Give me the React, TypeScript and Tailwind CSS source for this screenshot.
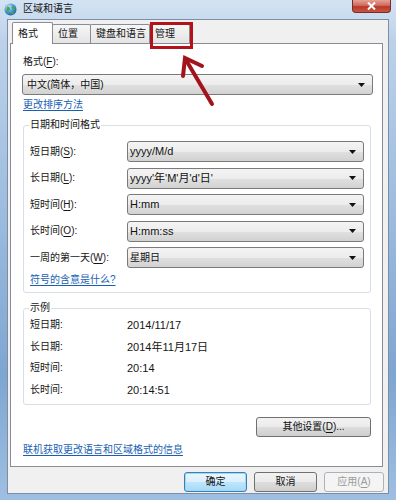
import React from "react";

const FONT = "font-['Liberation_Sans','Noto_Sans_CJK_SC',sans-serif]";
const T = "text-[10px] leading-[16px] text-[#151515]";

function Arrow() {
  return (
    <svg width="7" height="4" viewBox="0 0 7 4" className="shrink-0">
      <path d="M0 0h7L3.5 4z" fill="#111" />
    </svg>
  );
}

function Combo({
  text,
  className = "",
  latin = false,
  tight = false,
}: {
  text: string;
  className?: string;
  latin?: boolean;
  tight?: boolean;
}) {
  return (
    <div
      className={`flex items-center h-[21px] rounded-[3px] border border-[#7a7a7a] bg-[linear-gradient(to_bottom,#f4f4f4_0%,#ececec_50%,#e0e0e0_51%,#d2d2d2_100%)] ${tight ? "pl-[2px]" : "pl-[4px]"} pr-[7px] ${className}`}
    >
      <span className={`flex-1 ${latin ? "text-[11px]" : "text-[10px]"} leading-none text-[#111] whitespace-nowrap`}>{text}</span>
      <Arrow />
    </div>
  );
}

function U({ c }: { c: string }) {
  return <span className="underline underline-offset-2">{c}</span>;
}

function Tab({ label, selected, w }: { label: string; selected?: boolean; w: string }) {
  if (selected) {
    return (
      <div
        className={`relative z-10 ${w} h-[22px] mb-[-1px] ml-[2px] border border-b-0 border-[#898c95] rounded-t-[2px] bg-white flex items-start pt-[3px] pl-[5px] ${T}`}
      >
        {label}
      </div>
    );
  }
  return (
    <div
      className={`${w} h-[19px] -ml-px border border-b-0 border-[#898c95] rounded-t-[2px] bg-[linear-gradient(to_bottom,#f6f6f6,#e4e4e4)] flex items-start pt-[1px] pl-[5px] ${T}`}
    >
      {label}
    </div>
  );
}

function Btn({
  children,
  className = "",
  variant = "normal",
}: {
  children: React.ReactNode;
  className?: string;
  variant?: "normal" | "default" | "disabled";
}) {
  const v =
    variant === "default"
      ? "border-[#3c7fb1] shadow-[inset_0_0_0_1px_#9ed6f5] bg-[linear-gradient(to_bottom,#eaf6fd_0%,#d9f0fc_50%,#bee6fd_51%,#a7d9f5_100%)] text-[#111]"
      : variant === "disabled"
      ? "border-[#adb2b5] bg-[#f4f4f4] text-[#9a9a9a]"
      : "border-[#707070] bg-[linear-gradient(to_bottom,#f2f2f2_0%,#ebebeb_50%,#dddddd_51%,#cfcfcf_100%)] text-[#111]";
  return (
    <div
      className={`flex items-center justify-center h-[20px] rounded-[3px] border text-[10px] leading-none ${v} ${className}`}
    >
      {children}
    </div>
  );
}

function Link({ children, className = "" }: { children: React.ReactNode; className?: string }) {
  return (
    <div className={`text-[10px] leading-[16px] text-[#1a5fb4] underline underline-offset-2 ${className}`}>
      {children}
    </div>
  );
}

function GlobeIcon() {
  return (
    <svg width="13" height="13" viewBox="0 0 13 13">
      <defs>
        <radialGradient id="g" cx="0.35" cy="0.3" r="0.8">
          <stop offset="0" stopColor="#bfe8ff" />
          <stop offset="0.6" stopColor="#3a8fd0" />
          <stop offset="1" stopColor="#1d5a96" />
        </radialGradient>
      </defs>
      <circle cx="6.5" cy="6.5" r="6" fill="url(#g)" />
      <path d="M3 4c1.5-1 2.5 0 3 1.5S4 8 3.5 9.5 2 7 3 4z" fill="#4da44a" />
      <path d="M8 3c1.5 0 3 1.5 3 3s-1.5 1-2 .5S7 4 8 3z" fill="#4da44a" />
      <path d="M7.5 9c1-.5 2.5 0 2.5 1s-2 1.5-2.5 1S6.5 9.5 7.5 9z" fill="#4da44a" />
    </svg>
  );
}

export default function App() {
  const rows1: [string, string, string, string][] = [
    ["短日期(", "S", "):", "yyyy/M/d"],
    ["长日期(", "L", "):", "yyyy'年'M'月'd'日'"],
    ["短时间(", "H", "):", "H:mm"],
    ["长时间(", "O", "):", "H:mm:ss"],
    ["一周的第一天(", "W", "):", "星期日"],
  ];
  const rows2: [string, string][] = [
    ["短日期:", "2014/11/17"],
    ["长日期:", "2014年11月17日"],
    ["短时间:", "20:14"],
    ["长时间:", "20:14:51"],
  ];

  return (
    <div
      className={`${FONT} relative w-[396px] h-[500px] overflow-hidden flex flex-col bg-[linear-gradient(to_bottom,#d4e3f3_0%,#bcd2ea_8%,#9fbde0_40%,#7ea6d2_75%,#9ebfe2_100%)]`}
    >
      {/* Title bar */}
      <div className="h-[19px] flex items-start shrink-0">
        <div className="mt-[3px] ml-[4px]">
          <GlobeIcon />
        </div>
        <div className={`ml-[6px] mt-[1px] ${T}`}>区域和语言</div>
        <div className="flex-1" />
        <div className="mr-[5px] w-[39px] h-[13px] rounded-b-[4px] border border-t-0 border-[#7a2a2a] bg-[linear-gradient(to_bottom,#e4a296_0%,#d26a5b_45%,#b8392a_55%,#c9563f_100%)] flex items-center justify-center">
          <svg width="9" height="8" viewBox="0 0 9 8">
            <path d="M1 0.5l7 7M8 0.5l-7 7" stroke="#fff" strokeWidth="2" />
          </svg>
        </div>
      </div>

      {/* Client area */}
      <div className="flex-1 mx-[7px] mb-[6px] border border-[#7d8ea3] bg-[#f0f0f0] flex flex-col pl-[2px] pt-[2px]">
        {/* Tabs */}
        <div className="flex items-end h-[21px]">
          <Tab label="格式" selected w="w-[41px]" />
          <Tab label="位置" w="w-[39px]" />
          <Tab label="键盘和语言" w="w-[60px]" />
          <Tab label="管理" w="w-[41px]" />
        </div>

        {/* Panel */}
        <div className="w-[373px] h-[424px] border border-[#898c95] bg-white pl-[12px] pr-[9px] pt-[10px] flex flex-col">
          <div className={T}>
            格式(<U c="F" />):
          </div>
          <Combo text="中文(简体，中国)" className="mt-[4px] -ml-px" />
          <Link className="mt-[2px]">更改排序方法</Link>

          <fieldset className="mt-[4px] mr-[2px] border border-[#d5dfe5] rounded-[3px] pl-[6px] pr-[6px] pb-[4px]">
            <legend className={`px-[1px] -ml-[1px] ${T}`}>日期和时间格式</legend>
            <div className="mt-[8px] flex flex-col gap-[5.5px]">
              {rows1.map(([a, b, c, v], i) => (
                <div key={a} className="flex items-center">
                  <div className={`w-[97px] ${T}`}>
                    {a}
                    <U c={b} />
                    {c}
                  </div>
                  <Combo text={v} className="flex-1" latin={i < 4} tight />
                </div>
              ))}
            </div>
            <Link className="mt-[4px]">符号的含意是什么?</Link>
          </fieldset>

          <fieldset className="mt-[7px] mr-[2px] border border-[#d5dfe5] rounded-[3px] pl-[6px] pr-[6px] pb-[6px]">
            <legend className={`px-[1px] -ml-[1px] ${T}`}>示例</legend>
            <div className="mt-[1px] flex flex-col gap-[5.5px]">
              {rows2.map(([a, v]) => (
                <div key={a} className="flex items-center">
                  <div className={`w-[97px] ${T}`}>{a}</div>
                  <div className="text-[11px] leading-[16px] text-[#151515]">{v}</div>
                </div>
              ))}
            </div>
          </fieldset>

          <div className="flex justify-end mr-[2px] mt-[12px]">
            <Btn className="w-[115px]">
              其他设置(<U c="D" />)...
            </Btn>
          </div>

          <Link className="mt-[5px]">联机获取更改语言和区域格式的信息</Link>
        </div>

        {/* Bottom buttons */}
        <div className="flex justify-end gap-[7px] mt-[5px] pr-[4px]">
          <Btn variant="default" className="w-[63px]">确定</Btn>
          <Btn className="w-[63px]">取消</Btn>
          <Btn variant="disabled" className="w-[60px]">
            应用(<U c="A" />)
          </Btn>
        </div>
      </div>

      {/* Annotation: red box around 管理 tab */}
      <div className="absolute left-[150px] top-[22px] w-[43px] h-[27px] border-[3px] border-[#b3121b] pointer-events-none" />
      {/* Annotation arrow */}
      <svg className="absolute left-0 top-0 pointer-events-none" width="396" height="500">
        <path d="M212 104 L186 60" stroke="#a3131b" strokeWidth="4" strokeLinecap="round" />
        <path d="M183 76 L185 58 L202 66" fill="none" stroke="#a3131b" strokeWidth="4" strokeLinejoin="miter" strokeLinecap="round" />
      </svg>
    </div>
  );
}
